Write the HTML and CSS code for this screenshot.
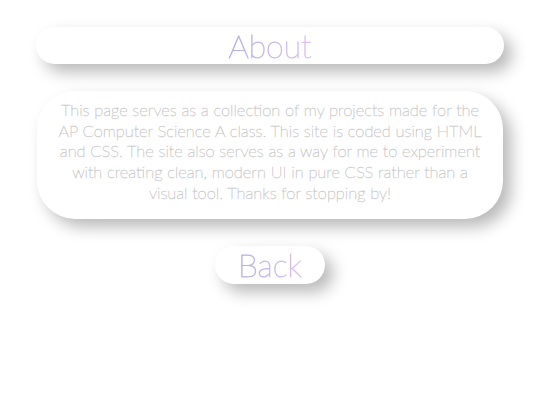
FILE: index.html
```html
<!DOCTYPE html>
<html>
<head>
<meta charset="utf-8">
<link rel="stylesheet" href="styles.css">
</head>
<body>
<main class="page">
  <header class="title-card"><h1 class="grad">About</h1></header>
  <section class="about-card">
    <p>This page serves as a collection of my projects made for the AP Computer Science A class. This site is coded using HTML and CSS. The site also serves as a way for me to experiment with creating clean, modern UI in pure CSS rather than a visual tool. Thanks for stopping by!</p>
  </section>
  <a class="back-btn" href="#"><span class="grad">Back</span></a>
</main>
</body>
</html>
```
FILE: styles.css
```css
html, body {
  margin: 0;
  padding: 0;
  background: #ffffff;
}
body {
  font-family: Lato, "Open Sans", sans-serif;
  font-weight: 100;
}
.page {
  display: flex;
  flex-direction: column;
  align-items: center;
  gap: 27px;
  padding: 27px 0 80px;
}
.grad {
  background: linear-gradient(to right, #b0b0e6, #dfc2ea);
  -webkit-background-clip: text;
  background-clip: text;
  color: transparent;
  -webkit-text-stroke: 0.9px transparent;
}
.title-card {
  width: 468px;
  height: 37px;
  border-radius: 19px;
  background: #fff;
  box-shadow: 8px 8px 16px rgba(0,0,0,0.28);
  display: flex;
  justify-content: center;
  align-items: center;
}
.title-card h1 {
  margin: 0;
  font-size: 32px;
  font-weight: 100;
  line-height: 37px;
}
.about-card {
  width: 466px;
  box-sizing: border-box;
  height: 128px;
  border-radius: 38px;
  background: #fff;
  box-shadow: 8px 8px 16px rgba(0,0,0,0.28);
  padding: 9px 16px;
}
.about-card p {
  margin: 0;
  text-align: center;
  font-size: 16.5px;
  line-height: 20.7px;
  color: #c8c8c8;
  -webkit-text-stroke: 0.45px #c8c8c8;
  font-weight: 100;
}
.back-btn {
  width: 110px;
  height: 38px;
  border-radius: 19px;
  background: #fff;
  box-shadow: 8px 8px 16px rgba(0,0,0,0.28);
  display: flex;
  justify-content: center;
  align-items: center;
  text-decoration: none;
  font-size: 32px;
  font-weight: 100;
  line-height: 38px;
}
```
